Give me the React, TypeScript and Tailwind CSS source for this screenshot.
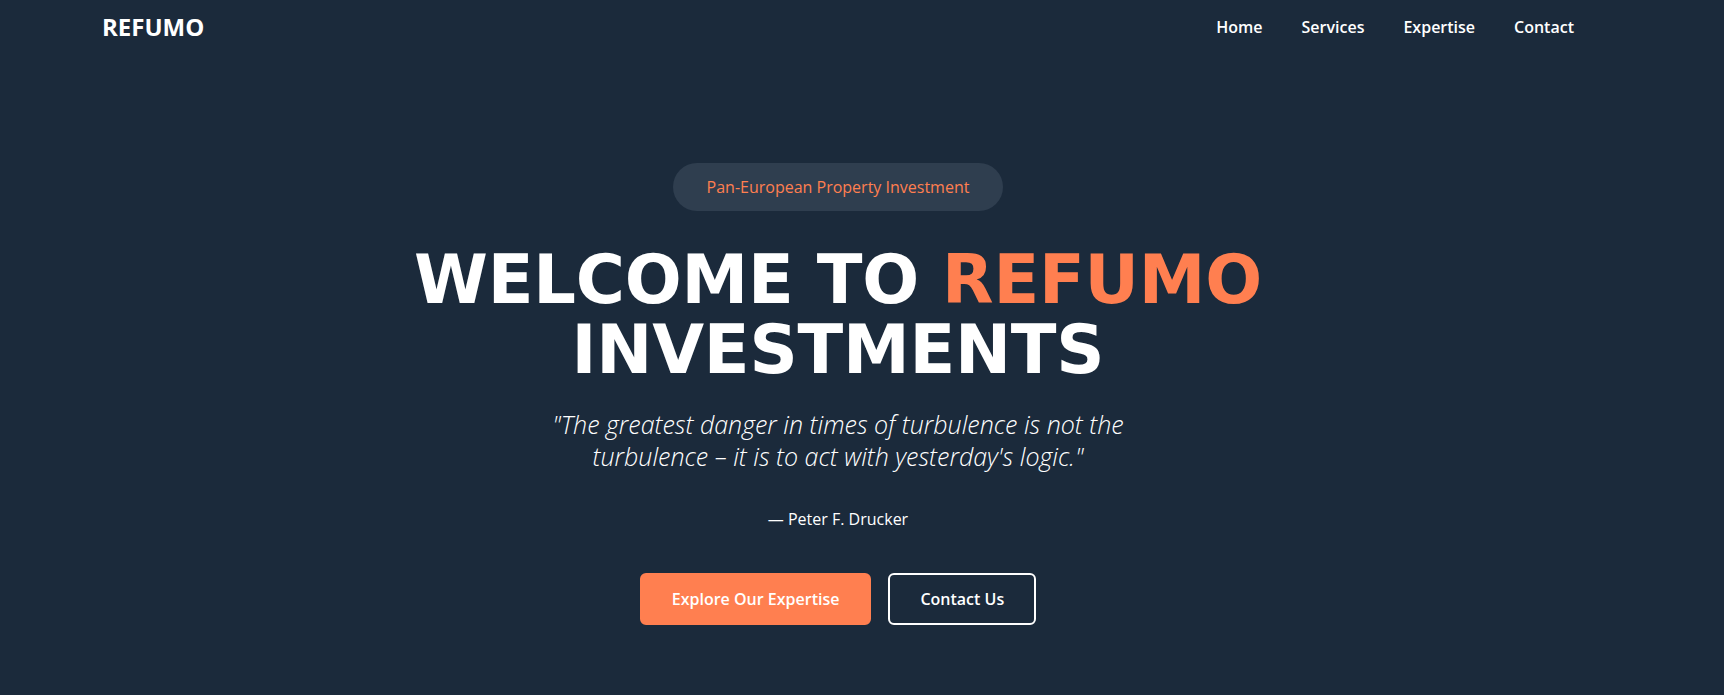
const navLinks = ["Home", "Services", "Expertise", "Contact"];

const App = () => {
  return (
    <div className="min-h-screen w-full bg-[#1b2a3b] font-['Open_Sans',sans-serif] text-white">
      <div className="w-[1676px]">
        {/* Top bar */}
        <nav className="flex h-[53px] items-center justify-between px-[102px]">
          <div className="text-2xl font-bold">REFUMO</div>
          <ul className="flex items-center gap-[39px] text-base font-semibold">
            {navLinks.map((link) => (
              <li key={link}>
                <a href="#" className="hover:text-[#ff7f50]">
                  {link}
                </a>
              </li>
            ))}
          </ul>
        </nav>

        {/* Hero */}
        <section className="flex flex-col items-center pt-[110px] pb-16 text-center">
          <div className="rounded-full bg-[#2f3e4f] px-[34px] py-3 text-base text-[#ff7f50]">
            Pan-European Property Investment
          </div>

          <h1 className="mt-[34px] font-['DejaVu_Sans',sans-serif] text-[67px] font-bold leading-[70px] tracking-[-0.2px]">
            WELCOME TO <span className="text-[#ff7f50]">REFUMO</span>
            <br />
            INVESTMENTS
          </h1>

          <p className="mt-[23px] max-w-[660px] text-[25px] font-light italic leading-8 text-white">
            "The greatest danger in times of turbulence is not the turbulence
            – it is to act with yesterday's logic."
          </p>

          <p className="mt-[35px] text-base">— Peter F. Drucker</p>

          <div className="mt-[42px] flex gap-[17px]">
            <a
              href="#"
              className="rounded-md border-2 border-[#ff7f50] bg-[#ff7f50] px-[30px] py-[12px] text-base font-semibold"
            >
              Explore Our Expertise
            </a>
            <a
              href="#"
              className="rounded-md border-2 border-white px-[30px] py-[12px] text-base font-semibold"
            >
              Contact Us
            </a>
          </div>
        </section>
      </div>
    </div>
  );
};

export default App;
